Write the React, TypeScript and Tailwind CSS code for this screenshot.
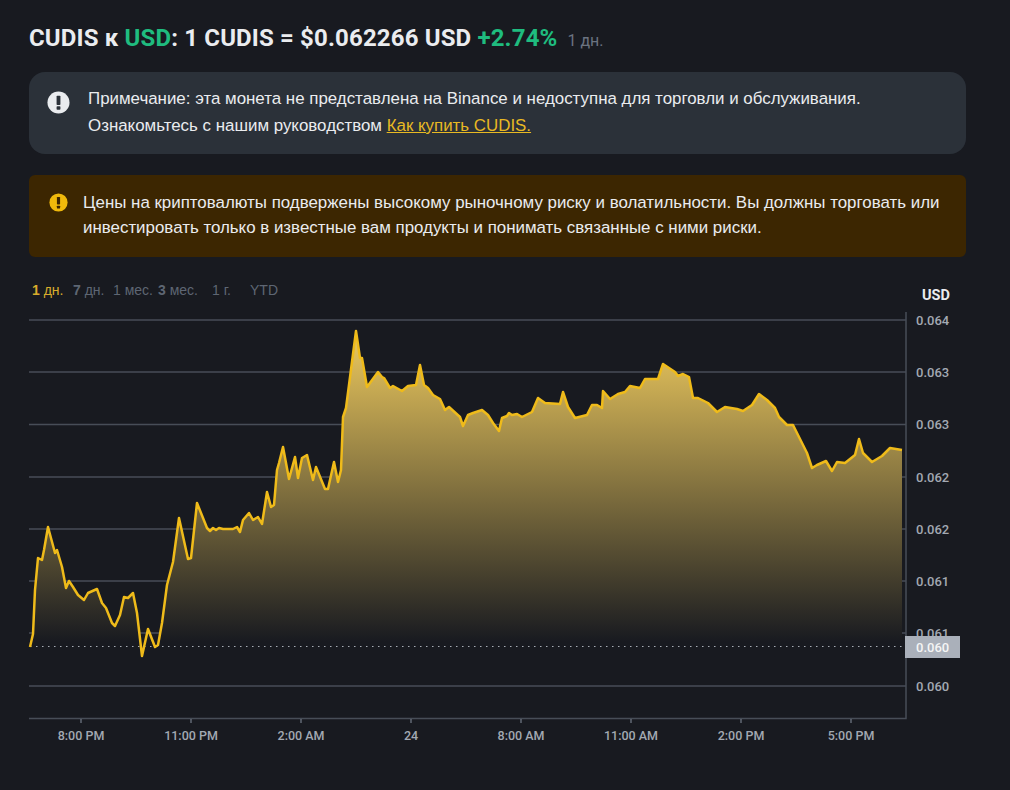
const pts: [number, number][] = [
[30,647],[33,634],[35,590],[38,558],[42,560],[44,550],[48,527],[55,553],[57,550],[62,567],[66,588],[69,581],[73,587],[78,595],[84,600],[88,593],[97,589],[102,603],[106,608],[112,623],[115,626],[120,615],[124,597],[128,598],[133,593],[137,613],[142,656],[148,629],[155,647],[158,645],[162,623],[167,585],[173,562],[179,518],[188,559],[191,558],[197,503],[207,528],[210,531],[213,528],[216,530],[219,528],[223,529],[233,529],[237,527],[240,532],[243,520],[249,513],[253,520],[258,517],[262,524],[267,492],[271,507],[274,505],[277,470],[279,463],[283,447],[289,479],[295,457],[298,478],[302,458],[307,455],[313,480],[316,467],[325,489],[328,489],[334,462],[338,482],[341,470],[343,417],[346,408],[356,331],[360,358],[362,358],[367,387],[378,372],[382,377],[384,378],[390,388],[393,386],[402,391],[408,386],[416,385],[420,365],[424,385],[428,388],[433,395],[440,399],[445,410],[449,407],[460,417],[463,426],[468,415],[473,413],[482,410],[488,415],[493,423],[499,431],[502,418],[507,416],[509,413],[512,415],[517,414],[522,417],[532,412],[538,398],[545,403],[560,404],[563,392],[568,407],[575,418],[587,415],[592,405],[597,405],[602,408],[603,391],[610,399],[618,394],[625,392],[630,386],[640,388],[645,379],[658,379],[663,364],[672,370],[675,372],[678,376],[683,374],[689,377],[693,398],[698,398],[708,403],[717,412],[725,407],[737,409],[743,411],[752,405],[759,394],[767,400],[775,408],[779,417],[787,425],[793,425],[807,453],[812,468],[817,465],[826,461],[832,471],[837,462],[845,463],[855,455],[859,439],[863,453],[872,462],[882,456],[890,448],[902,450],
];

const line = pts.map((p) => p.join(",")).join(" ");
const area = `30,647 ${line} 902,647`;
const grid = [320, 372, 424.5, 477, 529, 581, 633, 686];
const yLabels: [string, number][] = [["0.064",320],["0.063",372],["0.063",424.5],["0.062",477],["0.062",529],["0.061",581],["0.061",633],["0.060",686]];
const xLabels: [string, number][] = [["8:00 PM",81],["11:00 PM",191],["2:00 AM",301],["24",411],["8:00 AM",521],["11:00 AM",631],["2:00 PM",741],["5:00 PM",851]];
const y0 = 285;

function AlertIcon({ color, hole, size }: { color: string; hole: string; size: number }) {
  return (
    <svg width={size} height={size} viewBox="0 0 24 24" className="shrink-0">
      <circle cx="12" cy="12" r="11.5" fill={color} />
      <rect x="10" y="5" width="4" height="9.5" rx="0.8" fill={hole} />
      <rect x="10" y="16" width="4" height="3.6" rx="0.8" fill={hole} />
    </svg>
  );
}

function Tab({ n, u, active, bold, className }: { n: string; u?: string; active?: boolean; bold?: boolean; className: string }) {
  return (
    <span className={`${className} text-[14px] ${active ? "text-[#d8ac2c]" : "text-[#5e6673]"}`}>
      <span className={bold ? "font-bold" : "font-normal"}>{n}</span>
      {u ? <span> {u}</span> : null}
    </span>
  );
}

export default function App() {
  return (
    <div className="w-[1010px] h-[790px] overflow-hidden bg-[#181a20] font-['Liberation_Sans',sans-serif] text-[#eaecef]">
      <div className="pl-[29px] pr-[44px] pt-[23px]">
        <div className="flex items-baseline h-[30px] whitespace-nowrap font-['Roboto',sans-serif]">
          <h1 className="text-[24px] leading-[30px] font-bold tracking-[0.15px] text-[#eaecef]">
            CUDIS к <span className="text-[#1fbc7f]">USD</span>: 1 CUDIS = $0.062266 USD <span className="text-[#1fbc7f]">+2.74%</span>
          </h1>
          <span className="ml-[10px] text-[16px] text-[#6b7380]">1 дн.</span>
        </div>

        <div className="mt-[19px] h-[82px] rounded-2xl bg-[#2b3139] flex pl-[18px] pt-[19px]">
          <AlertIcon color="#eaecef" hole="#2b3139" size={23} />
          <div className="ml-[18px] text-[16.9px] leading-[27px] -mt-[6px]">
            <p>Примечание: эта монета не представлена на Binance и недоступна для торговли и обслуживания.</p>
            <p>
              Ознакомьтесь с нашим руководством <span className="text-[#e8b923] underline">Как купить CUDIS.</span>
            </p>
          </div>
        </div>

        <div className="mt-[21px] h-[82px] rounded-md bg-[#3c2601] flex pl-[20px] pt-[18px]">
          <AlertIcon color="#f0b90b" hole="#3c2601" size={19} />
          <p className="ml-[15px] text-[16.9px] leading-[25px] -mt-[3px] w-[870px]">
            Цены на криптовалюты подвержены высокому рыночному риску и волатильности. Вы должны торговать или инвестировать только в известные вам продукты и понимать связанные с ними риски.
          </p>
        </div>

        <div className="mt-[23px] h-[20px] flex items-center whitespace-nowrap pl-[3px] leading-[20px]">
          <Tab n="1" u="дн." active bold className="w-[41px]" />
          <Tab n="7" u="дн." bold className="w-[40px]" />
          <Tab n="1" u="мес." className="w-[45px]" />
          <Tab n="3" u="мес." bold className="w-[54px]" />
          <Tab n="1" u="г." className="w-[38px]" />
          <Tab n="YTD" className="" />
        </div>
      </div>

      <svg width="1010" height="505" viewBox={`0 ${y0} 1010 505`} className="block -mt-[15px] font-['Roboto',sans-serif]">
        <defs>
          <linearGradient id="fill" gradientUnits="userSpaceOnUse" x1="0" y1="331" x2="0" y2="642">
            <stop offset="0" stopColor="#eeca5e" />
            <stop offset="1" stopColor="#181a20" />
          </linearGradient>
        </defs>
        {grid.map((y) => (
          <line key={y} x1="29" x2="906" y1={y} y2={y} stroke="#474d57" strokeWidth="1.5" />
        ))}
        <polygon points={area} fill="url(#fill)" />
        <line x1="30" x2="906" y1="646.5" y2="646.5" stroke="#a7adb6" strokeWidth="1.2" strokeDasharray="1.5 4.5" />
        <polyline points={line} fill="none" stroke="#efbb1a" strokeWidth="2.5" strokeLinejoin="round" />
        <path d="M906 312V718.5H29" fill="none" stroke="#474d57" strokeWidth="1.5" />
        {xLabels.map(([t, x]) => (
          <g key={x}>
            <line x1={x} x2={x} y1="719" y2="723" stroke="#848e9c" strokeWidth="1" />
            <text x={x} y="740" textAnchor="middle" fontSize="12.5" fontWeight="500" fill="#a3a9b2">{t}</text>
          </g>
        ))}
        {yLabels.map(([t, y], i) => (
          <text key={i} x="916" y={y + 4.5} fontSize="13" fontWeight="500" fill="#a3a9b2">{t}</text>
        ))}
        <rect x="905" y="636" width="55" height="22" fill="#aab0ba" />
        <text x="916" y="651.5" fontSize="13" fontWeight="500" fill="#f5f5f5">0.060</text>
        <text x="922" y="300" fontSize="14.5" fontWeight="700" fill="#eaecef">USD</text>
      </svg>
    </div>
  );
}
